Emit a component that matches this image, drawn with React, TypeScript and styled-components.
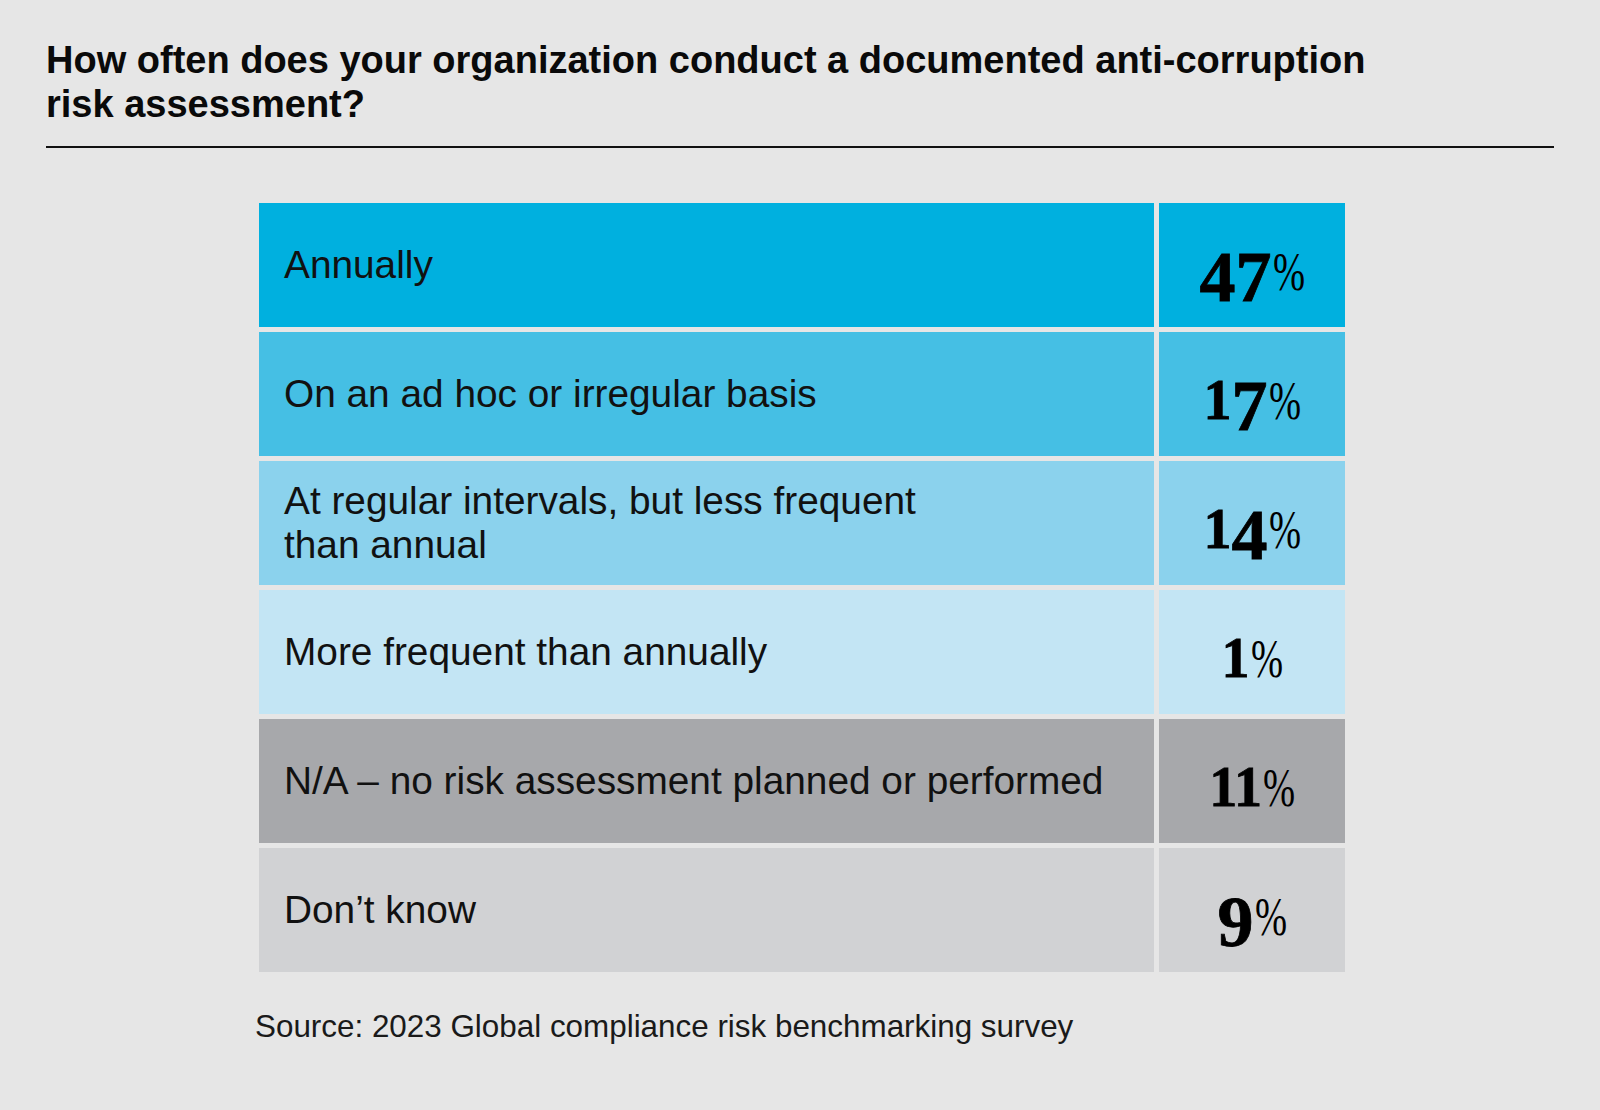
import { Fragment } from 'react'
import styled, { createGlobalStyle } from 'styled-components'

const GlobalStyle = createGlobalStyle`
  html, body {
    margin: 0;
    padding: 0;
    background: #e6e6e6;
  }
`

const Page = styled.main`
  min-height: 1110px;
  box-sizing: border-box;
  padding: 38px 46px 0;
  font-family: 'Liberation Sans', Arial, sans-serif;
  color: #111;
`

const Title = styled.h1`
  margin: 0;
  max-width: 1360px;
  font-size: 38px;
  line-height: 44px;
  font-weight: 700;
  color: #0a0a0a;
`

const Rule = styled.hr`
  margin: 20px 0 0;
  border: 0;
  height: 2px;
  background: #111;
`

const Table = styled.div`
  display: grid;
  grid-template-columns: 895px 186px;
  grid-auto-rows: 124px;
  gap: 5px;
  width: max-content;
  margin: 55px 0 0 213px;
`

const LabelCell = styled.div<{ $bg: string }>`
  display: flex;
  align-items: center;
  padding: 0 24px 0 25px;
  background: ${(p) => p.$bg};
  font-size: 38.8px;
  line-height: 44px;
  color: #111;
  white-space: pre-line;
`

const ValueCell = styled.div<{ $bg: string }>`
  display: flex;
  justify-content: center;
  align-items: flex-start;
  padding-top: 40px;
  background: ${(p) => p.$bg};
`

const ValueText = styled.span`
  font-family: 'Liberation Serif', 'Times New Roman', serif;
  font-size: 56px;
  line-height: 56px;
  white-space: nowrap;
  color: #000;
`

const Fig = styled.span<{ $tall?: boolean }>`
  font-size: ${(p) => (p.$tall ? '72px' : '56px')};
  vertical-align: ${(p) => (p.$tall ? '-11px' : 'baseline')};
  font-weight: 700;
  -webkit-text-stroke: 0.8px #000;
`

const Pct = styled.span`
  display: inline-block;
  margin-left: 1px;
  margin-right: -14px;
  font-size: 55px;
  font-weight: 400;
  transform: scaleX(0.7);
  transform-origin: left center;
`

const Source = styled.p`
  margin: 37px 0 0 209px;
  font-size: 31.4px;
  line-height: 36px;
  color: #1a1a1a;
`

const rows = [
  { label: 'Annually', value: '47', bg: '#00b0df' },
  { label: 'On an ad hoc or irregular basis', value: '17', bg: '#45bfe4' },
  { label: 'At regular intervals, but less frequent\nthan annual', value: '14', bg: '#8bd2ed' },
  { label: 'More frequent than annually', value: '1', bg: '#c3e5f4' },
  { label: 'N/A – no risk assessment planned or performed', value: '11', bg: '#a7a8ab' },
  { label: 'Don’t know', value: '9', bg: '#d1d2d4' },
]

// old-style figures: these digits hang below the baseline
const tallDigits = '34579'

function Value({ value }: { value: string }) {
  return (
    <ValueText>
      {value.split('').map((d, i) => (
        <Fig key={i} $tall={tallDigits.includes(d)}>
          {d}
        </Fig>
      ))}
      <Pct>%</Pct>
    </ValueText>
  )
}

export default function App() {
  return (
    <>
      <GlobalStyle />
      <Page>
        <Title>
          How often does your organization conduct a documented anti-corruption risk assessment?
        </Title>
        <Rule />
        <Table>
          {rows.map((row) => (
            <Fragment key={row.label}>
              <LabelCell $bg={row.bg}>{row.label}</LabelCell>
              <ValueCell $bg={row.bg}>
                <Value value={row.value} />
              </ValueCell>
            </Fragment>
          ))}
        </Table>
        <Source>Source: 2023 Global compliance risk benchmarking survey</Source>
      </Page>
    </>
  )
}
